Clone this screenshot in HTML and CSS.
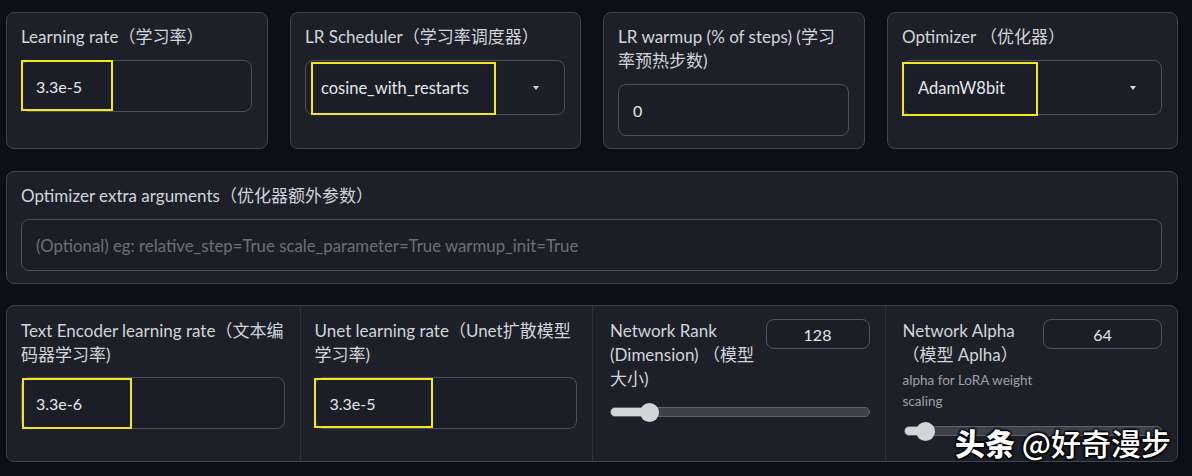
FILE: index.html
```html
<!DOCTYPE html>
<html lang="zh-CN">
<head>
<meta charset="utf-8">
<title>Training parameters</title>
<link rel="stylesheet" href="styles.css">
</head>
<body>
<div class="page">
  <div class="row-top">
    <div class="block">
      <div class="lbl">Learning rate（学习率）</div>
      <div class="field">3.3e-5<span class="mark mark-lr"></span></div>
    </div>
    <div class="block">
      <div class="lbl">LR Scheduler（学习率调度器）</div>
      <div class="field dropdown"><span>cosine_with_restarts</span><span class="caret"></span><span class="mark mark-sched"></span></div>
    </div>
    <div class="block">
      <div class="lbl">LR warmup (% of steps) (学习率预热步数)</div>
      <div class="field">0</div>
    </div>
    <div class="block">
      <div class="lbl">Optimizer （优化器）</div>
      <div class="field dropdown"><span>AdamW8bit</span><span class="caret"></span><span class="mark mark-opt"></span></div>
    </div>
  </div>

  <div class="block block-wide">
    <div class="lbl">Optimizer extra arguments（优化器额外参数）</div>
    <div class="field placeholder">(Optional) eg: relative_step=True scale_parameter=True warmup_init=True</div>
  </div>

  <div class="group">
    <div class="col">
      <div class="lbl">Text Encoder learning rate（文本编码器学习率)</div>
      <div class="field">3.3e-6<span class="mark mark-te"></span></div>
    </div>
    <div class="col">
      <div class="lbl">Unet learning rate（Unet扩散模型学习率)</div>
      <div class="field">3.3e-5<span class="mark mark-unet"></span></div>
    </div>
    <div class="col">
      <div class="head">
        <div class="lbl head-lbl">Network Rank (Dimension) （模型大小)</div>
        <div class="num num-rank">128</div>
      </div>
      <div class="slider slider-rank">
        <div class="track"><div class="fill fill-rank"></div></div>
        <div class="thumb thumb-rank"></div>
      </div>
    </div>
    <div class="col">
      <div class="head">
        <div class="head-text">
          <div class="lbl">Network Alpha<br>（模型 Aplha）</div>
          <div class="info">alpha for LoRA weight scaling</div>
        </div>
        <div class="num num-alpha">64</div>
      </div>
      <div class="slider slider-alpha">
        <div class="track"><div class="fill fill-alpha"></div></div>
        <div class="thumb thumb-alpha"></div>
      </div>
    </div>
  </div>

  <div class="watermark"><b>头条</b> @好奇漫步</div>
</div>
</body>
</html>
```

FILE: styles.css
```css
* { box-sizing: border-box; }

html, body {
  margin: 0;
  padding: 0;
  background: #0c0f18;
}

body {
  font-family: Lato, "Noto Sans CJK SC", "Noto Sans", sans-serif;
  color: #d4d7dd;
  font-size: 17px;
}

.page {
  position: relative;
  width: 1192px;
  height: 476px;
  padding: 12px 14px 0 6px;
  display: flex;
  flex-direction: column;
  gap: 22px;
}

.row-top {
  display: grid;
  grid-template-columns: 262px 291px 262px 291px;
  gap: 22px;
}

.block {
  background: #1d2028;
  border: 1px solid #3e434d;
  border-radius: 8px;
  padding: 12px 15px 12px 14px;
}

.lbl {
  line-height: 24px;
  color: #d2d5db;
  margin-bottom: 11px;
  padding-right: 2px;
}

.field {
  position: relative;
  height: 52px;
  border: 1px solid #4b505b;
  border-radius: 8px;
  background: #1b1e26;
  display: flex;
  align-items: center;
  padding: 0 14px;
  color: #e6e8ec;
  font-size: 16px;
}

.dropdown {
  height: 55px;
  justify-content: space-between;
  padding: 0 25px 0 15px;
  font-size: 16.5px;
}

.caret {
  width: 0;
  height: 0;
  border-left: 3.5px solid transparent;
  border-right: 3.5px solid transparent;
  border-top: 4px solid #d8dbe0;
}

.placeholder {
  color: #6b7079;
  font-size: 16.8px;
}

.mark {
  position: absolute;
  border: 2px solid #f3e61a;
  pointer-events: none;
}

.mark-lr { left: -1px; top: -1px; width: 92px; height: 51px; }
.mark-sched { left: 5px; top: 1px; width: 185px; height: 53px; }
.mark-opt { left: -1px; top: 1px; width: 136px; height: 54px; }
.mark-te { left: 0; top: 0; width: 110px; height: 51px; }
.mark-unet { left: -2px; top: 0; width: 119px; height: 50px; }

.group {
  margin-top: -1px;
  height: 157px;
  display: grid;
  grid-template-columns: repeat(4, minmax(0, 1fr));
  background: #1d2028;
  border: 1px solid #3e434d;
  border-radius: 8px;
  overflow: hidden;
}

.col {
  min-width: 0;
  padding: 13px 14px 12px 14px;
  border-left: 1px solid #2c3038;
}

.col:first-child {
  border-left: none;
}

.col .field {
  margin-right: 1px;
  margin-top: -1px;
}

.head {
  display: flex;
  align-items: flex-start;
  gap: 7px;
}

.head-lbl {
  flex: 1;
  min-width: 0;
  margin-bottom: 0;
  padding-left: 3px;
}

.head-text {
  flex: 1;
  min-width: 0;
  padding-left: 3px;
}

.head-text .lbl {
  margin-bottom: 3px;
}

.info {
  font-size: 13.5px;
  line-height: 21px;
  color: #9ca0a8;
}

.num {
  flex: none;
  height: 30px;
  margin-top: 0;
  border: 1px solid #4f5460;
  border-radius: 8px;
  display: flex;
  align-items: center;
  justify-content: center;
  color: #e6e8ec;
  font-size: 16px;
  background: #1b1e26;
}

.num-rank { width: 104px; margin-right: 1px; }
.num-alpha { width: 119px; margin-right: 1px; }

.slider {
  position: relative;
  height: 20px;
  margin-left: 3px;
  margin-right: 1px;
  display: flex;
  align-items: center;
}

.slider-rank { margin-top: 11px; }
.slider-alpha { margin-top: 9px; margin-left: 4px; }

.track {
  width: 100%;
  height: 10px;
  border-radius: 5px;
  background: #3d414b;
  border: 1px solid #5d626c;
  overflow: hidden;
}

.fill {
  height: 100%;
  background: #d5d6da;
}

.fill-rank { width: 40px; }
.fill-alpha { width: 22px; }

.thumb {
  position: absolute;
  top: 1px;
  width: 19px;
  height: 19px;
  border-radius: 50%;
  background: #d3d4d8;
}

.thumb-rank { left: 30px; }
.thumb-alpha { left: 12px; }

.watermark {
  position: absolute;
  left: 955px;
  top: 423px;
  font-size: 30px;
  line-height: 38px;
  color: #ffffff;
  font-family: "Noto Sans CJK SC", sans-serif;
  font-weight: 500;
  text-shadow: 0 0 2px #000, 1px 1px 2px #000, -1px -1px 2px #000, 1px -1px 2px #000, -1px 1px 2px #000;
  white-space: nowrap;
}

.watermark b {
  font-weight: 900;
}
```
